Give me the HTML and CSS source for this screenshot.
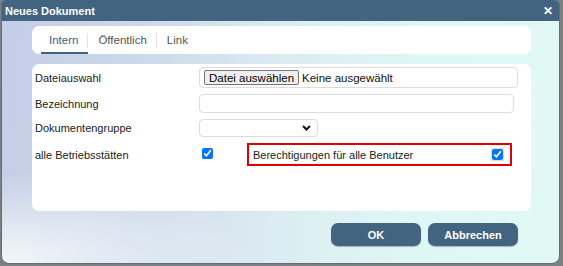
FILE: index.html
```html
<!DOCTYPE html>
<html lang="de">
<head>
<meta charset="utf-8">
<title>Neues Dokument</title>
<link rel="stylesheet" href="styles.css">
</head>
<body>
<div class="backdrop">
  <div class="dialog">
    <div class="titlebar">
      <span class="title">Neues Dokument</span>
      <span class="close">✕</span>
    </div>
    <div class="body">
      <div class="tabs">
        <div class="tab active">Intern</div>
        <div class="tab">Öffentlich</div>
        <div class="tab last">Link</div>
      </div>
      <div class="card">
        <div class="row row-file">
          <label class="label">Dateiauswahl</label>
          <div class="filebox">
            <span class="filebtn">Datei auswählen</span>
            <span class="filetext">Keine ausgewählt</span>
          </div>
        </div>
        <div class="row row-text">
          <label class="label">Bezeichnung</label>
          <div class="textbox"></div>
        </div>
        <div class="row row-select">
          <label class="label">Dokumentengruppe</label>
          <div class="selectbox">
            <svg class="chev" width="9" height="6" viewBox="0 0 9 6"><path d="M1 1 L4.5 4.5 L8 1" fill="none" stroke="#111" stroke-width="2"/></svg>
          </div>
        </div>
        <div class="row row-check">
          <label class="label">alle Betriebsstätten</label>
          <div class="checkcell">
            <input type="checkbox" class="cb" checked>
            <div class="redbox">
              <span>Berechtigungen für alle Benutzer</span>
              <input type="checkbox" class="cb cb-focus" checked>
            </div>
          </div>
        </div>
      </div>
      <div class="actions">
        <button class="btn">OK</button>
        <button class="btn">Abbrechen</button>
      </div>
    </div>
  </div>
</div>
</body>
</html>
```
FILE: styles.css
```css
html, body {
  margin: 0;
  padding: 0;
}
body {
  width: 563px;
  height: 266px;
  overflow: hidden;
  background: #7d8083;
  font-family: "Liberation Sans", Arial, sans-serif;
  font-size: 11px;
  color: #222;
}
.backdrop {
  padding-left: 2px;
}
.dialog {
  width: 557px;
  height: 263px;
  border-radius: 4px 4px 7px 7px;
  overflow: hidden;
  background:
    radial-gradient(ellipse 260px 90px at 0% 100%, rgba(244,250,250,0.95), rgba(244,250,250,0) 100%),
    linear-gradient(95deg, #c3cde6 0%, #cdd8ea 25%, #dcecf2 50%, #dff7f4 75%, #e1f9f5 100%);
  box-shadow: 0 0 0 1px #5c6f80;
}
.titlebar {
  height: 21px;
  background: #436480;
  color: #fff;
  display: flex;
  align-items: center;
  justify-content: space-between;
  padding: 0 6px 0 3px;
}
.title {
  font-weight: bold;
  font-size: 11px;
}
.close {
  font-weight: bold;
  font-size: 12px;
  line-height: 1;
}
.body {
  padding: 5px 28px 0 30px;
}
.tabs {
  height: 28px;
  background: #fff;
  border-radius: 7px;
  display: flex;
  align-items: stretch;
  padding-left: 9px;
}
.tab {
  display: flex;
  align-items: center;
  padding: 0 10px 0 10px;
  color: #555;
  font-size: 11.5px;
  position: relative;
}
.tab:not(.last)::after {
  content: "";
  position: absolute;
  right: 0;
  top: 7px;
  height: 15px;
  width: 1px;
  background: #e3e3e3;
}
.tab.active {
  color: #3e5e7c;
  padding-left: 8px;
  box-shadow: inset 0 -2px 0 #436480;
}
.card {
  margin-top: 10px;
  height: 144px;
  background: #fff;
  border-radius: 7px;
  padding-top: 3px;
  display: flex;
  flex-direction: column;
  gap: 6px;
}
.row {
  display: grid;
  grid-template-columns: 167px 1fr;
  align-items: center;
}
.label {
  padding-left: 3px;
  color: #222;
}
.row-file { height: 21px; }
.row-text { height: 19px; }
.row-select { height: 18px; }
.row-check { height: 23px; }
.filebox {
  box-sizing: border-box;
  width: 319px;
  height: 21px;
  border: 1px solid #dcdcdc;
  border-radius: 4px;
  display: flex;
  align-items: center;
  padding-left: 4px;
  gap: 3px;
}
.filebtn {
  display: inline-flex;
  align-items: center;
  height: 13px;
  padding: 0 4px;
  background: #efefef;
  border: 1px solid #767676;
  border-radius: 2px;
  color: #000;
  font-size: 11.5px;
}
.filetext {
  color: #111;
  font-size: 11.5px;
}
.textbox {
  width: 313px;
  height: 17px;
  border: 1px solid #dcdcdc;
  border-radius: 4px;
}
.selectbox {
  width: 111px;
  height: 16px;
  border: 1px solid #dcdcdc;
  border-radius: 4px;
  display: flex;
  align-items: center;
  justify-content: flex-end;
  padding-right: 6px;
}
.chev {
  display: block;
}
.checkcell {
  display: flex;
  align-items: center;
}
.cb {
  width: 11px;
  height: 11px;
  margin: 0;
  accent-color: #0075ff;
}
.checkcell > .cb {
  margin-left: 3px;
  margin-top: -3px;
}
.redbox {
  margin-left: 34px;
  height: 19px;
  border: 2px solid #e00000;
  display: flex;
  align-items: center;
  justify-content: space-between;
  padding: 0 7px 0 4px;
  width: 250px;
}
.cb-focus {
  outline: 1px solid #f6d9b0;
  outline-offset: 0;
}
.actions {
  display: flex;
  justify-content: flex-end;
  gap: 7px;
  margin-top: 12px;
  padding-right: 13px;
}
.btn {
  width: 90px;
  height: 23px;
  border: none;
  border-radius: 7px;
  background: #436480;
  color: #fff;
  font-family: "Liberation Sans", Arial, sans-serif;
  font-weight: bold;
  font-size: 11px;
  box-shadow: 0 1px 1px rgba(0,0,0,0.25);
}
```
